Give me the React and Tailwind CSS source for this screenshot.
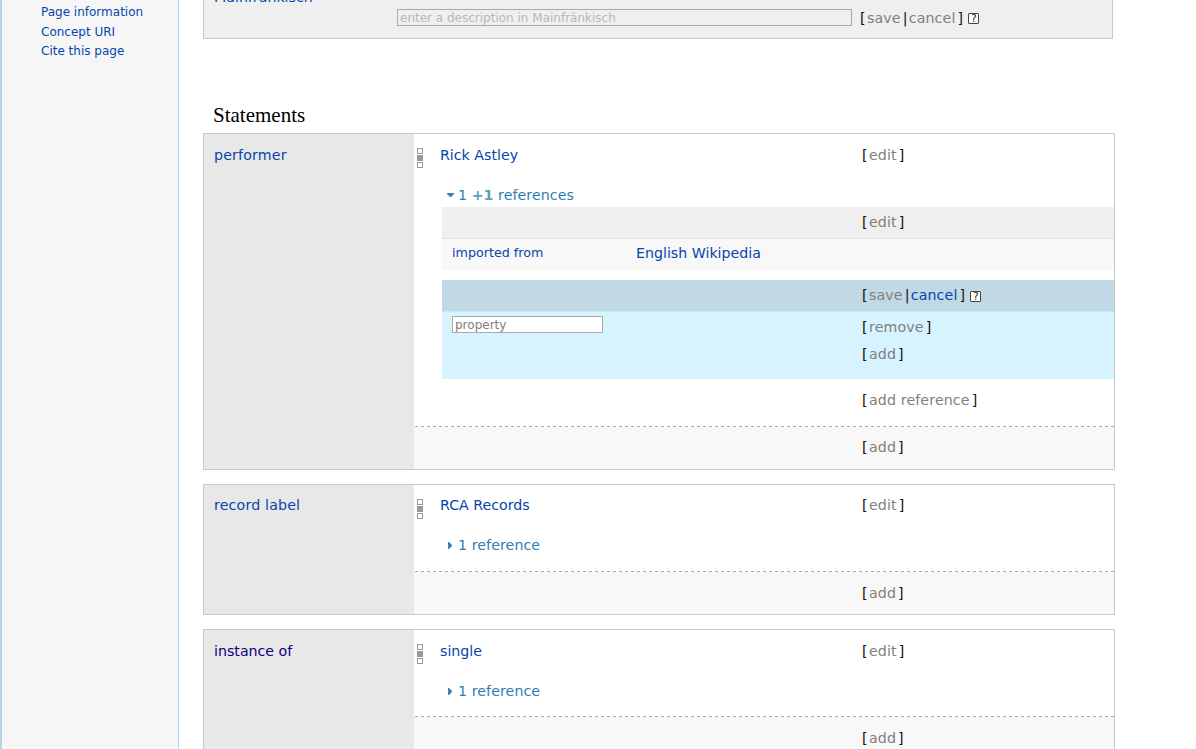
import React from "react";

const sidebarLinks = ["Page information", "Concept URI", "Cite this page"];

function Toolbar({ actions, helpOffset }) {
  return (
    <div className="flex h-4 items-center pl-px text-[14.2px] leading-4 tracking-[0.13px] whitespace-pre text-[#111]">
      <span className="w-[7px]">[</span>
      {actions.map((action, i) => (
        <React.Fragment key={action.label}>
          {i > 0 && <span className="ml-[2px] w-[6px]">|</span>}
          <a className={action.active ? "text-[#0645ad]" : "text-[#808080]"}>{action.label}</a>
        </React.Fragment>
      ))}
      <span className="ml-[2px] w-[6px]">]</span>
      {helpOffset && (
        <span
          className={`ml-[5px] flex h-[11px] w-[11px] items-center justify-center rounded-[1px] border border-[#444] bg-white text-[10px] leading-[9px] tracking-normal text-[#111] ${helpOffset}`}
        >
          ?
        </span>
      )}
    </div>
  );
}

function RankSelector() {
  return (
    <div className="mt-[14px] ml-[3px] flex w-[23px] flex-col gap-px">
      <span className="h-[6px] w-[6px] shrink-0 border border-[#999]" />
      <span className="h-[6px] w-[6px] shrink-0 bg-[#999]" />
      <span className="h-[6px] w-[6px] shrink-0 border border-[#999]" />
    </div>
  );
}

function Dashes() {
  return (
    <div className="ml-px h-px shrink-0 bg-[repeating-linear-gradient(to_right,#aaa_0_3px,transparent_3px_6px)]" />
  );
}

function Triangle({ open }) {
  return open ? (
    <svg className="h-2 w-2" viewBox="0 0 8 8" fill="#3a7fb5">
      <path d="M1 2h7v1L5 6h-1L1 3z" />
    </svg>
  ) : (
    <svg className="h-2 w-2" viewBox="0 0 8 8" fill="#3a7fb5">
      <path d="M2 1h1L6 4v1L3 8H2z" />
    </svg>
  );
}

function StatementGroup({ property, visited, compact, value, addTop, references, children }) {
  const textTop = compact ? "pt-[12px]" : "pt-[13px]";
  return (
    <section className="mb-[14px] flex w-[912px] border border-[#c9c9c9]">
      <div className={`w-[210px] shrink-0 bg-[#e8e8e8] pl-[10px] ${textTop}`}>
        <a
          className={`block text-[14.2px] leading-4 ${visited ? "text-[#0b0080]" : "tracking-[0.17px] text-[#0645ad]"}`}
        >
          {property}
        </a>
      </div>
      <div className="flex w-[700px] flex-col">
        <div className={`flex ${compact ? "h-[28px]" : "h-[29px]"}`}>
          <RankSelector />
          <div className={`flex w-[674px] ${textTop}`}>
            <a className="block w-[421px] text-[14.2px] leading-4 text-[#0645ad]">{value}</a>
            <Toolbar actions={[{ label: "edit" }]} />
          </div>
        </div>
        <div className="mt-6 flex h-4 items-center pl-8 text-[14.2px] leading-4 tracking-[0.08px] text-[#2e7db2]">
          <Triangle open={!!children} />
          <span className="pl-1 whitespace-pre">{references}</span>
        </div>
        {children ?? <div className={compact ? "h-[18px]" : "h-[17px]"} />}
        <Dashes />
        <div className={`h-[42px] bg-[#f8f8f8] pl-[447px] ${addTop}`}>
          <Toolbar actions={[{ label: "add" }]} />
        </div>
      </div>
    </section>
  );
}

export default function App() {
  return (
    <div className="flex h-screen overflow-hidden bg-white font-['DejaVu_Sans',sans-serif]">
      <aside className="w-[179px] shrink-0 border-r border-l-2 border-r-[#a7d7f9] border-l-[#b5d5e4] bg-[#f6f6f6] pt-[2px] pl-[39px]">
        {sidebarLinks.map((label) => (
          <a
            key={label}
            className="block h-[19px] text-[12px] leading-5 text-[#0645ad] first:h-[20px]"
          >
            {label}
          </a>
        ))}
      </aside>

      <main className="ml-6 w-[912px] shrink-0">
        <div className="flex h-[39px] w-[910px] border-x border-b border-[#c9c9c9] bg-[#efefef]">
          <div className="-mt-[11px] w-[193px] pl-[10px] text-[14.2px] leading-4 text-[#0645ad]">
            Mainfränkisch
          </div>
          <input
            readOnly
            placeholder="enter a description in Mainfränkisch"
            className="mt-[9px] block h-[17px] w-[455px] border border-[#aaa] px-[2px] text-[12px] leading-[15px] placeholder:text-[#b8b8b8]"
          />
          <div className="pt-[10px] pl-[7px]">
            <Toolbar actions={[{ label: "save" }, { label: "cancel" }]} helpOffset="mt-px" />
          </div>
        </div>

        <h2 className="mt-16 mb-[6px] pl-[10px] font-['Liberation_Serif',serif] text-[21px] leading-6 text-black">
          Statements
        </h2>

        <StatementGroup
          property="performer"
          value="Rick Astley"
          addTop="pt-[12px]"
          references={
            <>
              1 <b className="tracking-normal text-[#5ba3b8]">+1</b> references
            </>
          }
        >
          <div className="mt-1 ml-7 flex flex-col">
            <div className="h-[31px] bg-[#efefef] pt-[7px] pl-[419px]">
              <Toolbar actions={[{ label: "edit" }]} />
            </div>
            <div className="h-px bg-[repeating-linear-gradient(to_right,#ccc_0_1px,#f7f7f7_1px_2px)]" />
            <div className="flex h-[31px] bg-[#f8f8f8] pt-[6px] pl-[10px] text-[#0645ad]">
              <a className="w-[184px] text-[12.7px] leading-4">imported from</a>
              <a className="text-[14.2px] leading-4">English Wikipedia</a>
            </div>
            <div className="mt-[10px] h-[31px] bg-[#c0d9e5] pt-[7px] pl-[419px]">
              <Toolbar
                actions={[{ label: "save" }, { label: "cancel", active: true }]}
                helpOffset="mt-[3px]"
              />
            </div>
            <div className="h-px bg-[repeating-linear-gradient(to_right,#c0d9e5_0_1px,#d6f3ff_1px_2px)]" />
            <div className="flex h-[67px] bg-[#d6f3ff] pl-[10px]">
              <input
                readOnly
                placeholder="property"
                className="mt-1 block h-[17px] w-[151px] border border-[#aaa] bg-white px-[2px] text-[12px] leading-[15px] placeholder:text-[#808080]"
              />
              <div className="flex flex-col gap-[11px] pt-[7px] pl-[258px]">
                <Toolbar actions={[{ label: "remove" }]} />
                <Toolbar actions={[{ label: "add" }]} />
              </div>
            </div>
          </div>
          <div className="h-[47px] pt-[13px] pl-[447px]">
            <Toolbar actions={[{ label: "add reference" }]} />
          </div>
        </StatementGroup>

        <StatementGroup
          property="record label"
          compact
          value="RCA Records"
          addTop="pt-[13px]"
          references="1 reference"
        />
        <StatementGroup
          property="instance of"
          visited
          value="single"
          addTop="pt-[13px]"
          references="1 reference"
        />
      </main>
    </div>
  );
}
